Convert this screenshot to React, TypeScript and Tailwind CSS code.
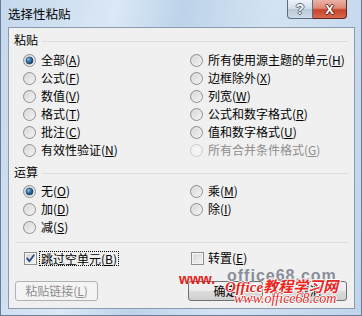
import React from "react";

type Item = { label: string; key: string; checked?: boolean; disabled?: boolean };

function Radio({ checked, disabled }: { checked?: boolean; disabled?: boolean }) {
  return (
    <svg width="13" height="13" viewBox="0 0 13 13" className="shrink-0">
      <defs>
        <linearGradient id="radOff" x1="0" y1="0" x2="1" y2="1">
          <stop offset="0" stopColor="#cfcfcf" />
          <stop offset="1" stopColor="#fbfbfb" />
        </linearGradient>
        <radialGradient id="radDot" cx="0.35" cy="0.35" r="0.7">
          <stop offset="0" stopColor="#8fc3e8" />
          <stop offset="0.5" stopColor="#2f6fa3" />
          <stop offset="1" stopColor="#123d61" />
        </radialGradient>
      </defs>
      <circle
        cx="6.5"
        cy="6.5"
        r="6"
        fill={disabled ? "#f4f4f4" : "url(#radOff)"}
        stroke={disabled ? "#c9c9c9" : "#8e8f8f"}
        strokeWidth="1"
      />
      <circle cx="6.5" cy="6.5" r="4.2" fill="none" stroke={disabled ? "#ececec" : "#e9e9e9"} strokeWidth="0.8" />
      {checked && <circle cx="6.5" cy="6.5" r="3.6" fill="url(#radDot)" stroke="#1b3f5e" strokeWidth="0.6" />}
    </svg>
  );
}

function Checkbox({ checked }: { checked?: boolean }) {
  return (
    <svg width="13" height="13" viewBox="0 0 13 13" className="shrink-0">
      <defs>
        <linearGradient id="chkBg" x1="0" y1="0" x2="1" y2="1">
          <stop offset="0" stopColor="#d2d2d2" />
          <stop offset="1" stopColor="#f7f7f7" />
        </linearGradient>
      </defs>
      <rect x="0.5" y="0.5" width="12" height="12" fill="#f4f4f4" stroke="#8e8f8f" />
      <rect x="2.5" y="2.5" width="8" height="8" fill="url(#chkBg)" stroke="#e2e2e2" strokeWidth="0.6" />
      {checked && (
        <path d="M3.2 6.4 L5.4 9.2 L9.8 3.2" fill="none" stroke="#2a4f86" strokeWidth="1.9" strokeLinecap="round" strokeLinejoin="round" />
      )}
    </svg>
  );
}

function Label({ text, k, disabled }: { text: string; k: string; disabled?: boolean }) {
  return (
    <span className={disabled ? "text-[#8d8d8d]" : "text-black"}>
      {text}(<span className="underline underline-offset-[1px]">{k}</span>)
    </span>
  );
}

function RadioRow({ item }: { item: Item }) {
  return (
    <div className="flex h-[18px] items-center gap-[5px] whitespace-nowrap">
      <Radio checked={item.checked} disabled={item.disabled} />
      <Label text={item.label} k={item.key} disabled={item.disabled} />
    </div>
  );
}

function Section({ title }: { title: string }) {
  return (
    <div className="flex h-[16px] items-center pl-[5px] pr-[6px]">
      <span className="leading-[16px] text-black">{title}</span>
      <div className="ml-[4px] mt-[2px] flex-1 border-t border-[#d6dde3]" />
    </div>
  );
}

function Button({ children, disabled, className }: { children: React.ReactNode; disabled?: boolean; className?: string }) {
  return (
    <div
      className={
        "flex h-[20px] items-center justify-center rounded-[3px] border " +
        (disabled
          ? "border-[#adb2b5] bg-[#f4f4f4] text-[#8d8d8d] "
          : "border-[#707070] bg-[linear-gradient(180deg,#f2f2f2_0%,#ebebeb_50%,#dddddd_51%,#cfcfcf_100%)] text-black ") +
        (className ?? "")
      }
    >
      {children}
    </div>
  );
}

export default function App() {
  const paste: Item[] = [
    { label: "全部", key: "A", checked: true },
    { label: "所有使用源主题的单元", key: "H" },
    { label: "公式", key: "F" },
    { label: "边框除外", key: "X" },
    { label: "数值", key: "V" },
    { label: "列宽", key: "W" },
    { label: "格式", key: "T" },
    { label: "公式和数字格式", key: "R" },
    { label: "批注", key: "C" },
    { label: "值和数字格式", key: "U" },
    { label: "有效性验证", key: "N" },
    { label: "所有合并条件格式", key: "G", disabled: true },
  ];
  const ops: Item[] = [
    { label: "无", key: "O", checked: true },
    { label: "乘", key: "M" },
    { label: "加", key: "D" },
    { label: "除", key: "I" },
    { label: "减", key: "S" },
  ];

  return (
    <div
      className="relative h-[316px] w-[362px] overflow-hidden border-x border-b border-[#6a7d94] bg-[linear-gradient(100deg,#c4d8ed_0%,#dbe8f5_28%,#bdd3ea_44%,#d4e3f2_66%,#bfd5eb_100%)] text-[12px]"
      style={{ fontFamily: "'Noto Sans CJK SC', 'Noto Sans', sans-serif" }}
    >
      {/* title bar */}
      <div className="flex h-[27px] items-start justify-between">
        <div className="pl-[7px] pt-[4px] text-[12.5px] leading-[20px] text-black">选择性粘贴</div>
        <div className="mr-[14px] flex h-[19px]">
          <div className="flex w-[26px] items-center justify-center rounded-bl-[4px] border border-[#5b6d84] border-t-0 bg-[linear-gradient(180deg,#eef3f8_0%,#d3dde8_48%,#b9c8d8_52%,#cfdbe7_100%)]">
            <span
              className="text-[14px] font-bold leading-[14px] text-[#f4f7fa] [text-shadow:-1px_0_#5d6b7c,1px_0_#5d6b7c,0_-1px_#5d6b7c,0_1px_#5d6b7c]"
              style={{ fontFamily: "'Liberation Sans', sans-serif" }}
            >
              ?
            </span>
          </div>
          <div className="flex w-[34px] items-center justify-center rounded-br-[4px] border border-l-0 border-t-0 border-[#5a2a22] bg-[linear-gradient(180deg,#eab3a6_0%,#df8a76_45%,#c8432a_55%,#d9684c_100%)]">
            <span
              className="text-[13px] font-bold leading-[13px] text-white [text-shadow:-1px_0_#6b2a1e,1px_0_#6b2a1e,0_-1px_#6b2a1e,0_1px_#6b2a1e]"
              style={{ fontFamily: "'Liberation Sans', sans-serif" }}
            >
              X
            </span>
          </div>
        </div>
      </div>

      {/* client area */}
      <div className="ml-[7px] flex h-[282px] w-[347px] flex-col border border-[#8a9bb0] bg-[#f0f0f0] pt-[4px]">
        <Section title="粘贴" />
        <div className="mt-[3px] grid grid-cols-[167px_1fr] pl-[14px]">
          {paste.map((it) => (
            <RadioRow key={it.label} item={it} />
          ))}
        </div>

        <div className="mt-[5px]">
          <Section title="运算" />
        </div>
        <div className="mt-[2px] grid grid-cols-[167px_1fr] pl-[14px]">
          {ops.map((it) => (
            <RadioRow key={it.label} item={it} />
          ))}
        </div>

        <div className="mx-[6px] mt-[6px] border-t border-[#d6dde3]" />

        <div className="mt-[6px] grid h-[18px] grid-cols-[167px_1fr] pl-[15px]">
          <div className="flex items-center gap-[2px] whitespace-nowrap">
            <Checkbox checked />
            <span className="border border-dotted border-black px-[1px] leading-[13px]">
              <Label text="跳过空单元" k="B" />
            </span>
          </div>
          <div className="flex items-center gap-[4px] whitespace-nowrap">
            <Checkbox />
            <Label text="转置" k="E" />
          </div>
        </div>

        <div className="mt-[14px] flex items-center pl-[6px] pr-[7px]">
          <Button disabled className="w-[83px]">
            <Label text="粘贴链接" k="L" disabled />
          </Button>
          <div className="ml-auto flex gap-[9px]">
            <Button className="w-[75px]">确定</Button>
            <Button className="w-[75px]">取消</Button>
          </div>
        </div>
      </div>

      {/* watermark */}
      <div
        className="absolute left-[226px] top-[268px] whitespace-nowrap text-[16px] font-bold leading-[16px] tracking-[1px] text-[#8a8d9a]"
        style={{ fontFamily: "'Liberation Sans', sans-serif" }}
      >
        office68.com
      </div>
      <div
        className="absolute left-[178px] top-[272px] whitespace-nowrap text-[14px] font-bold leading-[14px] text-[#e2231a]"
        style={{ fontFamily: "'Liberation Sans', sans-serif" }}
      >
        www.
      </div>
      <div
        className="absolute left-[224px] top-[277px] whitespace-nowrap text-[15px] font-bold italic leading-[17px] text-[#e8261e] [text-shadow:-1px_0_#fff,1px_0_#fff,0_-1px_#fff,0_1px_#fff]"
        style={{ fontFamily: "'Liberation Serif', 'Noto Sans CJK SC', serif" }}
      >
        Office<span style={{ fontFamily: "'Noto Sans CJK SC', sans-serif" }}>教程学习网</span>
      </div>
      <div
        className="absolute left-[233px] top-[292px] whitespace-nowrap text-[14px] italic leading-[14px] text-[#e8261e] [text-shadow:-1px_0_#fff,1px_0_#fff,0_-1px_#fff,0_1px_#fff]"
        style={{ fontFamily: "'Liberation Serif', serif" }}
      >
        www.office68.com
      </div>
    </div>
  );
}
